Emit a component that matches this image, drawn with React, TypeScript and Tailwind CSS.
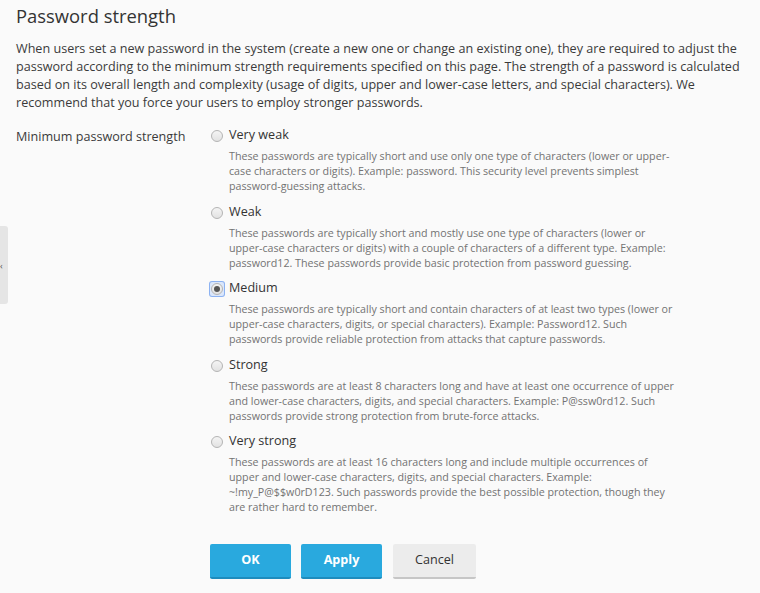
import { useState } from "react";

const LEVELS = [
  {
    id: "very-weak",
    label: "Very weak",
    text: "These passwords are typically short and use only one type of characters (lower or upper-case characters or digits). Example: password. This security level prevents simplest password-guessing attacks.",
  },
  {
    id: "weak",
    label: "Weak",
    text: "These passwords are typically short and mostly use one type of characters (lower or upper-case characters or digits) with a couple of characters of a different type. Example: password12. These passwords provide basic protection from password guessing.",
  },
  {
    id: "medium",
    label: "Medium",
    text: "These passwords are typically short and contain characters of at least two types (lower or upper-case characters, digits, or special characters). Example: Password12. Such passwords provide reliable protection from attacks that capture passwords.",
  },
  {
    id: "strong",
    label: "Strong",
    text: "These passwords are at least 8 characters long and have at least one occurrence of upper and lower-case characters, digits, and special characters. Example: P@ssw0rd12. Such passwords provide strong protection from brute-force attacks.",
  },
  {
    id: "very-strong",
    label: "Very strong",
    text: "These passwords are at least 16 characters long and include multiple occurrences of upper and lower-case characters, digits, and special characters. Example: ~!my_P@$$w0rD123. Such passwords provide the best possible protection, though they are rather hard to remember.",
  },
];

function Radio({ checked }: { checked: boolean }) {
  return (
    <span
      className={
        "mt-[3px] flex h-[14px] w-[14px] shrink-0 items-center justify-center rounded-[2px] " +
        (checked ? "bg-[#dbe7fb] ring-1 ring-[#8cb2f2]" : "")
      }
    >
      <span className="flex h-[12px] w-[12px] items-center justify-center rounded-full border border-[#b4b4b4] bg-gradient-to-b from-[#f4f4f4] to-[#e2e2e2]">
        {checked && <span className="h-[6px] w-[6px] rounded-full bg-[#555]" />}
      </span>
    </span>
  );
}

export default function App() {
  const [level, setLevel] = useState("medium");

  return (
    <div className="relative min-h-[593px] bg-[#fafafa] px-4 pt-[4px] text-[#333] [font-family:'Open_Sans',Arial,sans-serif]">
      <div className="absolute left-0 top-[226px] flex h-[78px] w-[8px] items-center rounded-r-[3px] bg-[#e5e5e5]">
        <span className="text-[9px] leading-none text-[#555]">‹</span>
      </div>

      <h1 className="text-[18.4px] leading-[24px] text-[#333]">Password strength</h1>

      <p className="mt-3 text-[12.6px] leading-[18px] text-[#3a3a3a]">
        When users set a new password in the system (create a new one or change an existing one), they are required to adjust the
        password according to the minimum strength requirements specified on this page. The strength of a password is calculated
        based on its overall length and complexity (usage of digits, upper and lower-case letters, and special characters). We
        recommend that you force your users to employ stronger passwords.
      </p>

      <div className="mt-[14px] flex">
        <div className="w-[194px] shrink-0 pt-[2px] text-[12.6px] leading-[18px] text-[#3a3a3a]">Minimum password strength</div>
        <div className="flex flex-col gap-[8.5px]">
          {LEVELS.map((l) => (
            <label key={l.id} className="flex cursor-pointer gap-[5px]" onClick={() => setLevel(l.id)}>
              <Radio checked={level === l.id} />
              <div>
                <div className="text-[12.6px] leading-[18px] text-[#333]">{l.label}</div>
                <div className="mt-[5px] w-[451px] text-[10.7px] leading-[15px] text-[#737373]">{l.text}</div>
              </div>
            </label>
          ))}
        </div>
      </div>

      <div className="ml-[194px] mt-[29px] flex gap-[10px]">
        <button className="h-[35px] w-[81px] rounded-[2px] border-b-2 border-[#1e8cbd] bg-[#29a9de] text-[12.6px] font-bold text-white">
          OK
        </button>
        <button className="h-[35px] w-[81px] rounded-[2px] border-b-2 border-[#1e8cbd] bg-[#29a9de] text-[12.6px] font-bold text-white">
          Apply
        </button>
        <button className="ml-[1px] h-[35px] w-[83px] rounded-[2px] border-b-2 border-[#c6c6c6] bg-[#ececec] text-[12.6px] text-[#333]">
          Cancel
        </button>
      </div>
    </div>
  );
}
